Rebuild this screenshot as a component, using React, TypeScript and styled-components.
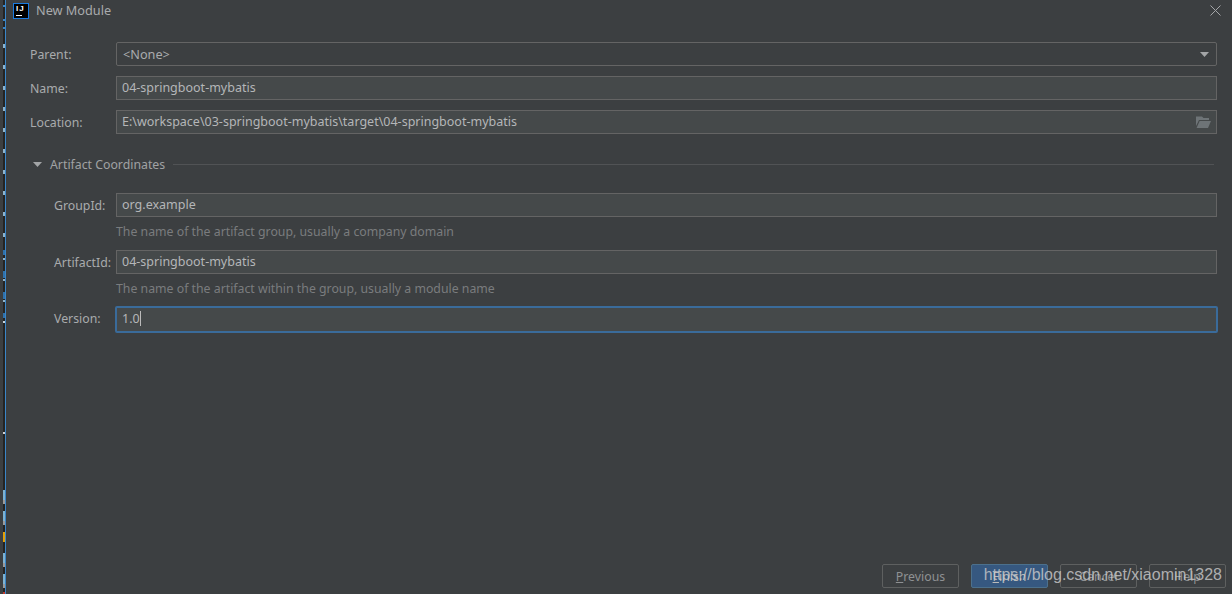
import styled, { createGlobalStyle } from "styled-components";

const GlobalStyle = createGlobalStyle`
  html, body {
    margin: 0;
    padding: 0;
    background: #3c3f41;
    overflow: hidden;
  }

  * {
    box-sizing: border-box;
  }
`;

// bits of the IDE window that show behind the dialog's left edge
const stripMarks = [
  { top: 5, height: 2, color: "#3a86c8" },
  { top: 19, height: 2, color: "#3a86c8" },
  { top: 27, height: 2, color: "#3a86c8" },
  { top: 44, height: 4, color: "#8fb4cc" },
  { top: 65, height: 4, color: "#8fb4cc" },
  { top: 86, height: 4, color: "#8fb4cc" },
  { top: 107, height: 4, color: "#8fb4cc" },
  { top: 128, height: 4, color: "#8fb4cc" },
  { top: 149, height: 4, color: "#8fb4cc" },
  { top: 170, height: 4, color: "#8fb4cc" },
  { top: 191, height: 4, color: "#8fb4cc" },
  { top: 212, height: 4, color: "#8fb4cc" },
  { top: 233, height: 4, color: "#8fb4cc" },
  { top: 250, height: 5, color: "#2f72ad" },
  { top: 258, height: 2, color: "#8fb4cc" },
  { top: 271, height: 7, color: "#2f72ad" },
  { top: 279, height: 2, color: "#8fb4cc" },
  { top: 292, height: 7, color: "#2f72ad" },
  { top: 300, height: 2, color: "#8fb4cc" },
  { top: 313, height: 5, color: "#2f72ad" },
  { top: 321, height: 2, color: "#c8d4dc" },
  { top: 432, height: 2, color: "#d0d0d0" },
  { top: 490, height: 10, color: "#7fb2d0" },
  { top: 500, height: 4, color: "#9a9a9a" },
  { top: 511, height: 10, color: "#7fb2d0" },
  { top: 521, height: 4, color: "#9a9a9a" },
  { top: 532, height: 10, color: "#e3a008" },
  { top: 553, height: 10, color: "#7fb2d0" },
  { top: 563, height: 4, color: "#9a9a9a" },
  { top: 574, height: 10, color: "#7fb2d0" },
  { top: 584, height: 4, color: "#9a9a9a" },
  { top: 592, height: 2, color: "#c0392b" },
];

function Caret() {
  return (
    <svg width="9" height="5" viewBox="0 0 9 5">
      <path d="M0 0 H9 L4.5 5 Z" fill="#a3a5a7" />
    </svg>
  );
}

function FolderIcon() {
  return (
    <svg width="15" height="12" viewBox="0 0 15 12">
      <path d="M0 0.5 H6 L7.5 2 H13 V4 H3 L0 10 Z" fill="#6e7477" />
      <path d="M3.6 5 H15 L12 12 H0.6 Z" fill="#6e7477" />
    </svg>
  );
}

function CloseIcon() {
  return (
    <svg width="11" height="11" viewBox="0 0 11 11">
      <path d="M0.5 0.5 L10.5 10.5 M10.5 0.5 L0.5 10.5" stroke="#a4a6a8" strokeWidth="1" fill="none" />
    </svg>
  );
}

export default function App() {
  return (
    <Page>
      <GlobalStyle />
      <Strip>
        {stripMarks.map((mark) => (
          <StripMark
            key={mark.top}
            style={{ top: mark.top, height: mark.height, background: mark.color }}
          />
        ))}
      </Strip>
      <Dialog>
        <TitleBar>
          <Logo>
            <LogoText>IJ</LogoText>
            <LogoBar />
          </Logo>
          <Title>New Module</Title>
          <CloseButton>
            <CloseIcon />
          </CloseButton>
        </TitleBar>

        <TopForm>
          <Row>
            <Label>Parent:</Label>
            <Combo>
              <span>&lt;None&gt;</span>
              <Caret />
            </Combo>
          </Row>
          <Row>
            <Label>Name:</Label>
            <Field defaultValue="04-springboot-mybatis" />
          </Row>
          <Row>
            <Label>Location:</Label>
            <FieldWrap>
              <Field defaultValue="E:\workspace\03-springboot-mybatis\target\04-springboot-mybatis" />
              <FolderSlot>
                <FolderIcon />
              </FolderSlot>
            </FieldWrap>
          </Row>
        </TopForm>

        <SectionHeader>
          <Caret />
          <SectionTitle>Artifact Coordinates</SectionTitle>
          <SectionLine />
        </SectionHeader>

        <SubForm>
          <Row>
            <SubLabel>GroupId:</SubLabel>
            <Field defaultValue="org.example" />
          </Row>
          <Hint>The name of the artifact group, usually a company domain</Hint>
          <Row>
            <SubLabel>ArtifactId:</SubLabel>
            <Field defaultValue="04-springboot-mybatis" />
          </Row>
          <Hint>The name of the artifact within the group, usually a module name</Hint>
          <VersionRow>
            <VersionLabel>Version:</VersionLabel>
            <FocusBox>
              <VersionText>1.0</VersionText>
              <TextCaret />
            </FocusBox>
          </VersionRow>
        </SubForm>

        <Footer>
          <Button><u>P</u>revious</Button>
          <Button $primary><u>F</u>inish</Button>
          <Button>Cancel</Button>
          <Button>Help</Button>
          <Watermark>https://blog.csdn.net/xiaomin1328</Watermark>
        </Footer>
      </Dialog>
    </Page>
  );
}

const Page = styled.div`
  display: flex;
  width: 1232px;
  height: 594px;
  overflow: hidden;
  font-family: "Noto Sans", "Open Sans", sans-serif;
  font-size: 12.3px;
  color: #b4b6b8;
`;

const Strip = styled.div`
  position: relative;
  flex: 0 0 6px;
  border-right: 1px solid #3a86c8;
  background: linear-gradient(90deg, #3c3f41 0 3px, #242424 3px 5px);
`;

const StripMark = styled.span`
  position: absolute;
  left: 3px;
  width: 2px;
`;

const Dialog = styled.div`
  flex: 1;
  display: flex;
  flex-direction: column;
  background: #3c3f41;
`;

const TitleBar = styled.div`
  display: flex;
  align-items: center;
  height: 21px;
  padding: 0 11px 0 7px;
`;

const Logo = styled.div`
  position: relative;
  width: 16px;
  height: 16px;
  margin: 1px 7px 0 0;
  background: #000;
  border: 1px solid #1a7be0;
`;

const LogoText = styled.span`
  position: absolute;
  left: 2px;
  top: 1px;
  font: bold 8px/8px "Liberation Sans", sans-serif;
  letter-spacing: 1px;
  color: #fff;
`;

const LogoBar = styled.span`
  position: absolute;
  left: 2px;
  bottom: 2px;
  width: 6px;
  height: 1px;
  background: #fff;
`;

const Title = styled.span`
  flex: 1;
  padding-bottom: 2px;
  font-size: 12.7px;
  color: #a9abad;
`;

const CloseButton = styled.div`
  display: flex;
  align-items: center;
`;

const TopForm = styled.div`
  display: flex;
  flex-direction: column;
  gap: 10px;
  margin-top: 21px;
  padding: 0 15px 0 24px;
`;

const Row = styled.div`
  display: flex;
  align-items: center;
`;

const VersionRow = styled(Row)`
  margin-top: -1px;
`;

const Label = styled.label`
  flex: 0 0 86px;
  color: #a9abad;
`;

const SubLabel = styled(Label)`
  flex-basis: 62px;
`;

const VersionLabel = styled(SubLabel)`
  padding-bottom: 2px;
`;

const Field = styled.input.attrs({ type: "text" })`
  flex: 1;
  width: 100%;
  height: 24px;
  padding: 0 5px 2px;
  border: 1px solid #646464;
  background: #45494a;
  color: #b4b6b8;
  font-family: inherit;
  font-size: 12.5px;
  outline: none;
`;

const FieldWrap = styled.div`
  position: relative;
  flex: 1;
  display: flex;
`;

const FolderSlot = styled.div`
  position: absolute;
  right: 6px;
  top: 6px;
  display: flex;
`;

const Combo = styled.div`
  flex: 1;
  display: flex;
  align-items: center;
  justify-content: space-between;
  height: 24px;
  padding: 0 7px 0 6px;
  border: 1px solid #646464;
  border-radius: 2px;
  background: #3c3f41;
  color: #a9abad;
  font-size: 12.7px;
`;

const SectionHeader = styled.div`
  display: flex;
  align-items: center;
  gap: 8px;
  margin-top: 20px;
  padding: 0 18px 0 27px;
  height: 20px;
`;

const SectionTitle = styled.span`
  color: #a0a2a4;
`;

const SectionLine = styled.div`
  flex: 1;
  height: 1px;
  margin-top: 1px;
  background: #515355;
`;

const SubForm = styled.div`
  display: flex;
  flex-direction: column;
  margin-top: 19px;
  padding: 0 15px 0 48px;
`;

const Hint = styled.div`
  height: 33px;
  padding: 6px 0 0 62px;
  color: #7a7c7e;
`;

const FocusBox = styled.div`
  flex: 1;
  display: flex;
  align-items: center;
  height: 27px;
  margin: 0 -1px;
  padding: 0 5px 2px;
  border: 2px solid #3a6b9a;
  border-radius: 2px;
  background: #45494a;
  color: #b4b6b8;
  font-size: 12.5px;
`;

const VersionText = styled.span`
  line-height: 16px;
`;

const TextCaret = styled.span`
  width: 1px;
  height: 15px;
  background: #bbbbbb;
`;

const Footer = styled.div`
  position: relative;
  display: flex;
  justify-content: flex-end;
  gap: 12px;
  margin-top: auto;
  padding: 0 6px 6px 0;
`;

const Button = styled.button<{ $primary?: boolean }>`
  width: 77px;
  height: 24px;
  padding: 0;
  border: 1px solid ${(p) => (p.$primary ? "#4c708c" : "#5e6060")};
  border-radius: 2px;
  background: ${(p) => (p.$primary ? "#365880" : "#3c3f41")};
  color: ${(p) => (p.$primary ? "#bbbbbb" : "#8f9193")};
  font: inherit;
`;

const Watermark = styled.div`
  position: absolute;
  right: 10px;
  top: 0;
  font: 16px/22px "Liberation Sans", sans-serif;
  color: rgba(205, 205, 205, 0.8);
  pointer-events: none;
`;
